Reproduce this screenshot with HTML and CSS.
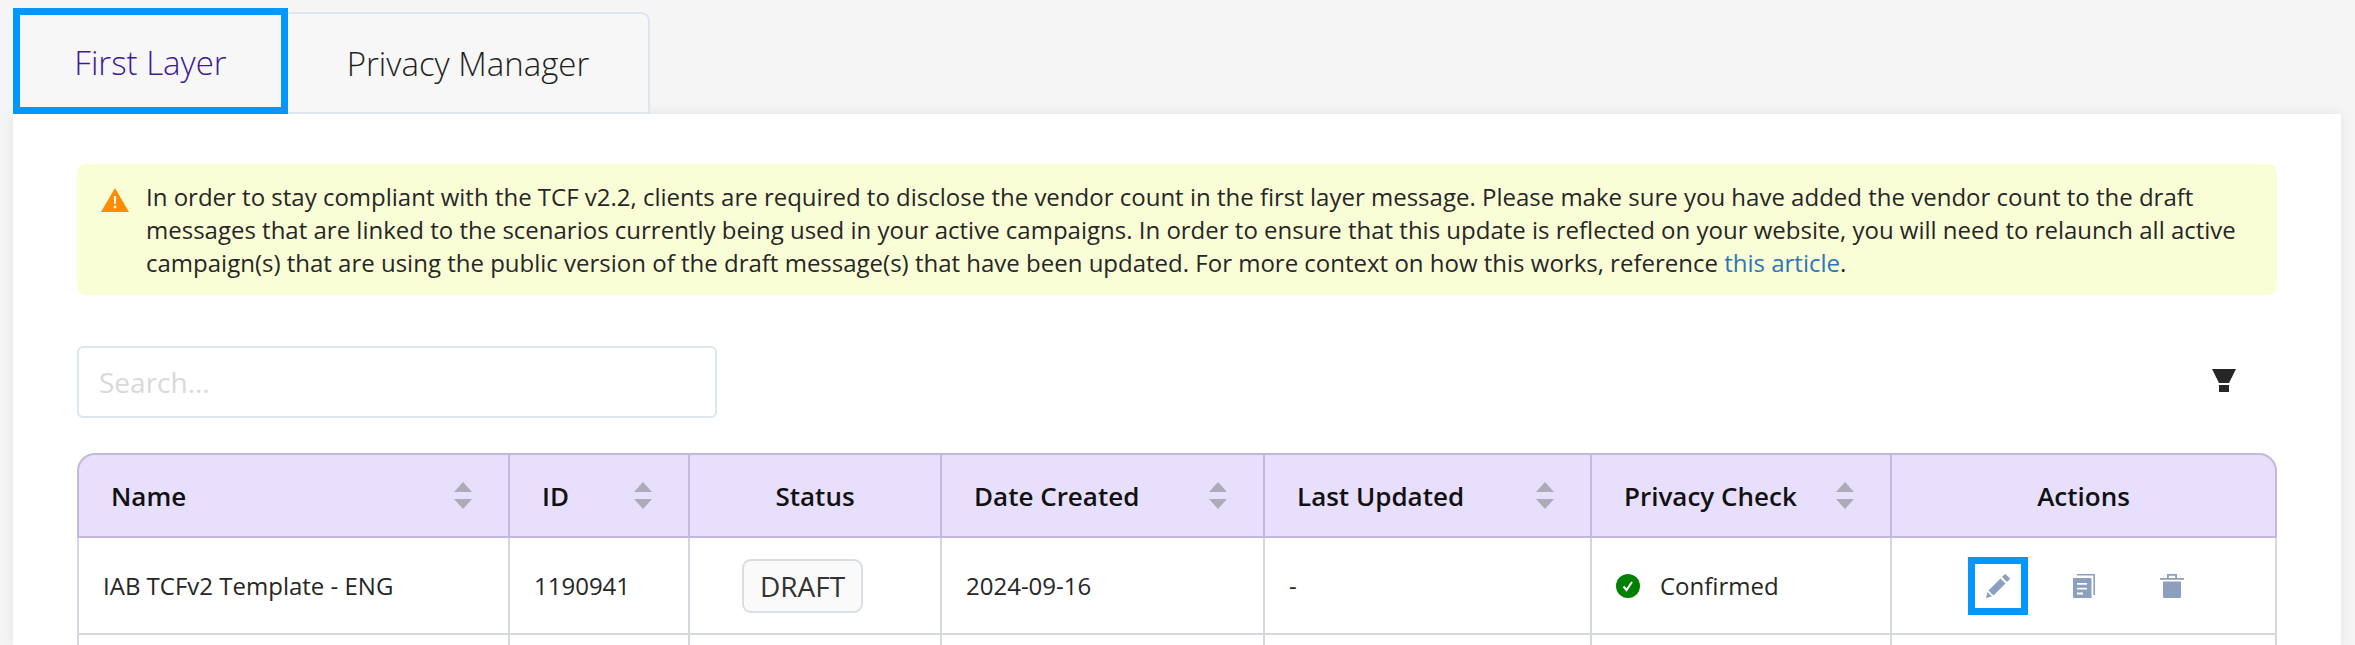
FILE: index.html
```html
<!DOCTYPE html>
<html lang="en">
<head>
<meta charset="utf-8">
<title>Messages</title>
<link rel="stylesheet" href="styles.css">
</head>
<body>
<div class="page">
  <nav class="tabs">
    <div class="tab tab-active">First Layer</div>
    <div class="tab tab-other">Privacy Manager</div>
  </nav>
  <main class="card">
    <div class="alert">
      <svg class="alert-icon" viewBox="0 0 28 24"><path fill="#ff8c00" d="M14 0 28 24H0Z"/><path fill="#fff" d="M12.800 8h2.400l-.4 8h-1.600z"/><circle fill="#fff" cx="14" cy="19" r="1.400"/></svg>
      <p class="alert-text">In order to stay compliant with the TCF v2.2, clients are required to disclose the vendor count in the first layer message. Please make sure you have added the vendor count to the draft messages that are linked to the scenarios currently being used in your active campaigns. In order to ensure that this update is reflected on your website, you will need to relaunch all active campaign(s) that are using the public version of the draft message(s) that have been updated. For more context on how this works, reference <a href="#" class="link">this article</a>.</p>
    </div>
    <div class="toolbar">
      <input class="search" type="text" placeholder="Search...">
      <svg class="filter" viewBox="0 0 24 24"><path fill="#262626" d="M0 0h24l-7 14H7z"/><path fill="#262626" d="M7 16h10v7H7z"/></svg>
    </div>
    <table class="grid">
      <colgroup>
        <col class="c-name"><col class="c-id"><col class="c-status"><col class="c-date"><col class="c-updated"><col class="c-privacy"><col class="c-actions">
      </colgroup>
      <thead>
        <tr>
          <th><div class="th-in"><span>Name</span><span class="sort"></span></div></th>
          <th><div class="th-in"><span>ID</span><span class="sort"></span></div></th>
          <th class="center">Status</th>
          <th><div class="th-in"><span>Date Created</span><span class="sort"></span></div></th>
          <th><div class="th-in"><span>Last Updated</span><span class="sort"></span></div></th>
          <th><div class="th-in"><span>Privacy Check</span><span class="sort"></span></div></th>
          <th class="center">Actions</th>
        </tr>
      </thead>
      <tbody>
        <tr>
          <td>IAB TCFv2 Template - ENG</td>
          <td>1190941</td>
          <td class="center"><span class="badge">DRAFT</span></td>
          <td>2024-09-16</td>
          <td>-</td>
          <td><div class="check"><svg class="check-icon" viewBox="0 0 24 24"><circle cx="12" cy="12" r="12" fill="#008000"/><path fill="none" stroke="#fff" stroke-width="2" d="M7.500 12.500l3 3.500 5.500-8"/></svg><span>Confirmed</span></div></td>
          <td>
            <div class="actions">
              <button class="act act-focus"><svg viewBox="0 0 24 24"><path fill="#8c9fbf" d="M14.500 4.500 19.500 9.500 7.500 21.500 2.500 16.500z"/><path fill="#8c9fbf" d="M16 3 18.500.5a1 1 0 0 1 1.400 0l3.600 3.600a1 1 0 0 1 0 1.400L21 8z"/><path fill="#8c9fbf" d="M1.500 18 6 22.500 0 24z"/></svg></button>
              <button class="act act-copy"><svg viewBox="0 0 24 24"><path fill="#8c9fbf" fill-rule="evenodd" d="M1 4h17.500a1 1 0 0 1 1 1v19H2a1 1 0 0 1-1-1zM5 9v1.800h10V9zm0 4.800v1.800h10v-1.800zm0 4.800v1.800h6v-1.800z"/><path fill="#8c9fbf" d="M5 0h18v21h-1.600V1.600H5z"/></svg></button>
              <button class="act"><svg viewBox="0 0 24 24"><path fill="#8c9fbf" d="M3 7.500h18V23a1 1 0 0 1-1 1H4a1 1 0 0 1-1-1z"/><path fill="#8c9fbf" d="M0 4h7V0h10v4h7v1.800H0zM8.800 4h6.400V1.800H8.800z" fill-rule="evenodd"/></svg></button>
            </div>
          </td>
        </tr>
        <tr class="row-next"><td></td><td></td><td></td><td></td><td></td><td></td><td></td></tr>
      </tbody>
    </table>
  </main>
</div>
</body>
</html>
```

FILE: styles.css
```css
html, body {
  margin: 0;
  padding: 0;
  height: 645px;
  overflow: hidden;
  background: #f5f5f5;
  font-family: "Open Sans", "Liberation Sans", sans-serif;
  color: #262626;
}
.page {
  padding: 8px 14px 0 13px;
}
.tabs {
  display: flex;
  align-items: flex-end;
  height: 106px;
}
.tab {
  display: flex;
  align-items: center;
  justify-content: center;
  box-sizing: border-box;
  font-size: 33px;
  font-weight: 300;
  background: #f7f7f7;
}
.tab-active {
  width: 275px;
  height: 106px;
  padding-top: 2px;
  color: #3e1a94;
  border: 7px solid #0098ff;
}
.tab-other {
  width: 362px;
  height: 102px;
  border: 2px solid #dde5ed;
  border-left: 0;
  border-radius: 0 9px 0 0;
  color: #1f1f1f;
}
.card {
  background: #fff;
  padding: 50px 64px 0;
  box-shadow: 0 0 12px rgba(0, 0, 0, 0.08);
  height: 531px;
  box-sizing: border-box;
  overflow: hidden;
}
.alert {
  display: flex;
  align-items: flex-start;
  gap: 17px;
  background: #fafed6;
  border-radius: 9px;
  padding: 16px 24px 16px 24px;
}
.alert-icon {
  flex: none;
  width: 28px;
  height: 24px;
  margin-top: 8px;
}
.alert-text {
  margin: 0;
  font-size: 24px;
  line-height: 33px;
  color: #262626;
}
.link {
  color: #2e75b7;
  text-decoration: none;
}
.toolbar {
  display: flex;
  align-items: center;
  justify-content: space-between;
  margin-top: 51px;
  padding-right: 41px;
}
.search {
  box-sizing: border-box;
  width: 640px;
  height: 72px;
  padding: 0 20px;
  border: 2px solid #dde5ed;
  border-radius: 6px;
  background: #fff;
  outline: none;
  font-family: inherit;
  font-size: 28px;
  font-weight: 400;
}
.search::placeholder {
  color: #d9d9d9;
  opacity: 1;
}
.filter {
  width: 24px;
  height: 24px;
  margin-top: -2px;
}
.grid {
  width: 2200px;
  margin-top: 35px;
  border-collapse: separate;
  border-spacing: 0;
  table-layout: fixed;
}
.c-name { width: 431px; }
.c-id { width: 180px; }
.c-status { width: 252px; }
.c-date { width: 323px; }
.c-updated { width: 327px; }
.c-privacy { width: 300px; }
.c-actions { width: 387px; }
th {
  box-sizing: border-box;
  height: 85px;
  background: #e8dffd;
  border-top: 2px solid #c4b8dc;
  border-bottom: 2px solid #c4b8dc;
  border-left: 2px solid #c4b8dc;
  font-size: 26px;
  font-weight: 600;
  color: #111;
  text-align: left;
  padding: 0 36px 0 32px;
}
th:first-child {
  border-top-left-radius: 18px;
}
th:last-child {
  border-top-right-radius: 18px;
  border-right: 2px solid #c4b8dc;
}
th.center {
  text-align: center;
  padding: 0;
}
.th-in {
  display: flex;
  align-items: center;
  justify-content: space-between;
}
.sort {
  display: flex;
  flex-direction: column;
  gap: 7px;
  width: 18px;
  flex: none;
}
.sort::before,
.sort::after {
  content: "";
  width: 0;
  height: 0;
  border-left: 9px solid transparent;
  border-right: 9px solid transparent;
}
.sort::before {
  border-bottom: 10px solid #aeaab8;
}
.sort::after {
  border-top: 10px solid #aeaab8;
}
td {
  box-sizing: border-box;
  height: 97px;
  border-left: 2px solid #d5d8de;
  border-bottom: 2px solid #d5d8de;
  font-size: 24px;
  color: #262626;
  padding: 0 0 0 24px;
}
td:last-child {
  border-right: 2px solid #d5d8de;
}
td.center {
  text-align: center;
  padding: 0 25px 0 0;
}
.badge {
  display: inline-flex;
  align-items: center;
  justify-content: center;
  box-sizing: border-box;
  width: 121px;
  height: 54px;
  background: #fafafa;
  border: 2px solid #d9dee5;
  border-radius: 9px;
  font-size: 28px;
  color: #333;
}
.check {
  display: flex;
  align-items: center;
  gap: 20px;
}
.check-icon {
  width: 24px;
  height: 24px;
  flex: none;
}
.actions {
  display: flex;
  align-items: center;
  padding-left: 52px;
}
.act {
  display: flex;
  align-items: center;
  justify-content: center;
  box-sizing: border-box;
  width: 60px;
  height: 58px;
  padding: 0;
  margin: 0 27px 0 0;
  background: none;
  border: 7px solid transparent;
}
.act-copy svg {
  margin-left: -2px;
}
.act svg {
  width: 24px;
  height: 24px;
  display: block;
}
.act-focus {
  border-color: #0098ff;
}
```
